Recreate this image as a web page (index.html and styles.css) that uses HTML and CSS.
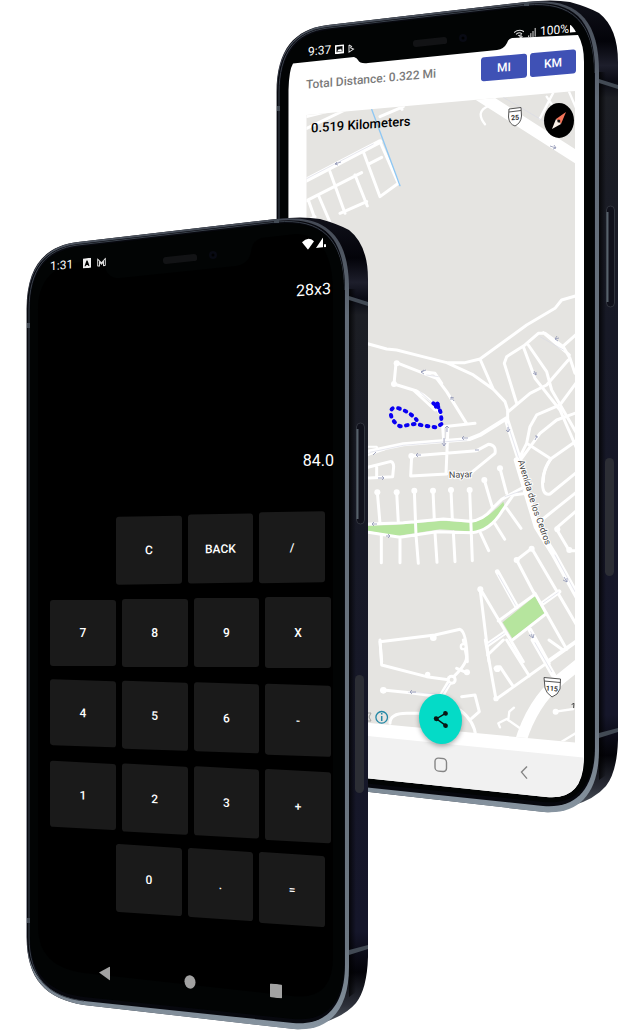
FILE: index.html
```html
<!DOCTYPE html>
<html lang="en">
<head>
<meta charset="utf-8">
<meta name="viewport" content="width=device-width, initial-scale=1">
<title>Distance tracker and calculator</title>
<link rel="stylesheet" href="styles.css">
</head>
<body>
<svg class="defs" aria-hidden="true">
  <defs>
    <linearGradient id="side" x1="0" x2="0" y1="0" y2="1">
      <stop offset="0" stop-color="#10111a"/><stop offset=".05" stop-color="#030309"/><stop offset=".08" stop-color="#1d1e2b"/><stop offset=".1" stop-color="#090a13"/><stop offset=".12" stop-color="#1c1e24"/>
      <stop offset=".4" stop-color="#171926"/><stop offset=".88" stop-color="#15162a"/><stop offset=".93" stop-color="#030308"/><stop offset=".97" stop-color="#2b2e38"/><stop offset="1" stop-color="#5b636c"/>
    </linearGradient>
    <linearGradient id="rim" x1="0" x2="0" y1="0" y2="1">
      <stop offset="0" stop-color="#444a55"/><stop offset=".12" stop-color="#626c78"/><stop offset=".9" stop-color="#6c7782"/><stop offset="1" stop-color="#8794a0"/>
    </linearGradient>
    <linearGradient id="edge" x1="0" x2="1" y1="0" y2="0">
      <stop offset="0" stop-color="#000" stop-opacity=".75"/><stop offset="1" stop-color="#000" stop-opacity="0"/>
    </linearGradient>
    <symbol id="frame" viewBox="0 0 342 813">
      <path fill="url(#side)" d="M0.6 92C0.6 50 18 29 52 25L250 2Q276 -1 294 2Q312 7 323 13Q342 28 342 62V740Q341 772 330 786Q319 799 296 806Q284 813 268 812L58 788C20 782 0.6 762 0.6 720Z"/>
      <path fill="url(#rim)" d="M0.8 92C0.8 51 19 29 52 25L250 2C300 -3 323 18 323 72V750C323 793 303 815 268 812L58 788C20 782 0.8 762 0.8 720Z"/>
      <path fill="#07080e" d="M1 93C1 52 19 31 52 27L250 4C298 -1 319 20 319 73V747C319 789 300 809 267 806L58 784C24 780 1 760 1 720Z"/>
      <path fill="none" stroke="#39404a" d="M3 720V93C3 53 19 32 52 28L250 5C296 1 318 22 318 73M3 720C3 760 22 780 58 784"/>
      <path fill="#020404" d="M4 93C4 54 21 34 52 30L250 7C296 2 318 24 318 73V747C318 787 299 805 267 802L58 780C24 776 4 757 4 720Z"/>
      <path fill="url(#edge)" d="M323 72H330V775L323 780Z"/>
      <path fill="#424a54" d="M323 79L342 85V89L323 83ZM323 733L342 728V732L323 738ZM1 106H4V111H1ZM1 701H4V706H1ZM248 2L253 2V6L248 6Z"/>
      <rect x="330.500" y="206" width="8" height="101" rx="4" fill="#10111b" stroke="#30343d"/>
      <path d="M331.500 212V302" stroke="#56616b" stroke-width="2"/>
      <rect x="329" y="458" width="9" height="118" rx="4.500" fill="#2c2e35"/>
      <path fill="#121315" d="M140 40L168 37Q171 37 171 40V42Q171 44 168 44L140 47Q137 47 137 44V43Q137 40 140 40Z"/>
      <circle cx="187" cy="38" r="4" fill="#080a13"/><circle cx="187" cy="38" r="1.500" fill="#000"/>
    </symbol>
    <clipPath id="map-area"><path d="M306.500 115L575 91V742.500L306.500 717Z"/></clipPath>
  </defs>
</svg>

<main class="scene">
  <section class="phone phone-back" aria-label="Distance tracker">
    <svg class="art" viewBox="276 0 342 813" preserveAspectRatio="none" aria-hidden="true">
      <use href="#frame" x="276" y="0" width="342" height="813"/>
      <path fill="#fff" d="M288.500 90Q289 70 293 63.500L354 57Q357 58 358 60Q360 64 368 63L497 50Q504 49 507 43Q508 39 512 38L578 35Q584 45 584 62V757Q584 801 546 797L288 770Z"/>
      <path fill="#f1f1f1" d="M288 728L583 757.500Q584 801 546 797L288 770Z"/>
      <g clip-path="url(#map-area)">
        <path fill="#e5e4e1" d="M300 80H580V750H300Z"/>
        <g class="road" transform="translate(270 0) scale(.3333)">
          <path stroke-width="14" d="M100 545L330 425"/>
          <path d="M280 455L330 590L385 550L330 425M300 490L335 472M110 602L200 556L275 518M180 515L225 640M210 640L290 605M255 525L292 618M145 585L190 690M115 600L150 700M100 670L135 650M110 385L225 330M110 350L170 335M330 350L400 320M388 315L396 328"/>
          <path stroke-width="36" d="M625 283L930 478"/>
          <path d="M810 355L850 278M895 270L925 340M830 290L850 320M645 373Q615 335 655 318" stroke-width="7"/>
          <path class="lane" d="M700 292L900 410M110 536L310 432"/>
          <path stroke="#8ec7f3" stroke-width="4" d="M305 328L390 557"/>
        </g>
        <g class="road" transform="translate(360 200) scale(.3333)">
          <path d="M15 429L80 447L110 450L200 473L260 488L315 488L360 477L500 375L585 325L605 300L650 287M260 488L340 525L400 568L435 605L443 630V660M360 477L400 568M102 552L108 490L115 490L230 535L260 575L318 668M102 552L170 573Q215 595 240 640M160 570L225 630M190 515L225 520L245 550M250 680L345 670M248 680L252 735M264 680L258 822M155 768L350 752L385 733Q410 735 405 760L335 817M155 768L152 828L260 822"/>
          <path stroke-width="12" d="M10 758L130 733L330 717L360 705L440 655"/>
          <path stroke-width="6" d="M25 740H50L55 755M10 770L75 748"/>
          <path stroke-width="16" d="M440 660L480 785"/>
          <path d="M445 635L510 580L560 555L625 480M470 610L433 490L440 470L495 435L535 400L555 400L610 440L630 475L645 520M550 398L628 465M490 440L525 535L600 630L650 745M505 435L560 515L575 570L650 700M650 402L610 438M650 547L600 615L530 645L510 680L500 730L480 770M650 638L590 660L540 700L485 775M500 730L570 775M650 722L575 775Q550 800 550 845"/>
          <g fill="#fff" stroke="none"><circle cx="110" cy="490" r="9"/><circle cx="102" cy="552" r="9"/><circle cx="154" cy="768" r="9"/></g>
          <path class="lane" d="M200 525L235 530M180 575L225 618M252 740L257 690M540 410L610 450M30 757L130 736L320 720M443 672L478 780"/>
          <path stroke="#0a00f2" stroke-width="12" stroke-dasharray="5 16" d="M232 612L243 640L245 672L228 682L205 679L165 672L120 679Q95 665 92 640Q92 620 112 624Q150 635 170 660"/>
          <path stroke="#0a00f2" stroke-width="12" d="M220 610L235 622M233 611L228 620"/>
        </g>
        <g class="road" transform="translate(360 460) scale(.3333)">
          <path fill="#b6e59e" stroke="none" d="M20 197L100 195L165 190L250 182L335 188Q380 180 430 125L434 140Q400 205 345 215L240 208L110 228L20 212Z"/>
          <path fill="#b6e59e" stroke="none" d="M525 408L553 460L457 535L428 487Z"/>
          <path d="M15 24L90 5Q100 3 101 20L98 50L15 55M50 15V50M52 97L60 190M110 97L115 187M163 92L168 225L175 310M219 92L223 180M273 90L277 178M329 90L337 302M373 60L398 145M420 25L440 100M64 228V308M120 232V308M225 218L231 307M280 216L285 305M362 220L386 272M404 190L434 238M440 145L483 205M15 193L130 188L250 177L330 184Q370 180 395 148L425 118L490 82M15 215L120 232L230 215L335 218Q390 212 425 155L460 105L500 100"/>
          <path stroke-width="18" d="M470 0L500 100L530 200L580 280L655 415"/>
          <path d="M570 0Q540 50 550 90Q555 105 570 102L650 37M545 180L650 96M650 152L588 205L628 272H650M525 405L470 300L515 265L650 495M360 385L490 605M360 385L387 605M525 400L620 568M415 483L525 403M455 542L560 460M560 605L650 542M65 605L60 545L225 525L300 508Q320 515 322 605"/>
          <path stroke-width="14" d="M412 335L470 440M510 510L565 610M382 555L435 518M548 430L597 395"/>
          <g fill="#fff" stroke="none"><circle cx="52" cy="97" r="9"/><circle cx="110" cy="97" r="9"/><circle cx="163" cy="92" r="9"/><circle cx="219" cy="92" r="9"/><circle cx="273" cy="90" r="9"/><circle cx="329" cy="90" r="9"/><circle cx="373" cy="60" r="9"/><circle cx="420" cy="25" r="9"/><circle cx="470" cy="300" r="9"/><circle cx="515" cy="266" r="9"/><circle cx="592" cy="208" r="9"/><circle cx="628" cy="270" r="9"/><circle cx="361" cy="388" r="9"/><circle cx="220" cy="533" r="10"/><circle cx="310" cy="560" r="11"/></g>
          <path class="lane" d="M415 345L467 436M512 515L560 600M384 553L433 520M550 428L595 397M585 285L645 395M435 110L490 90"/>
        </g>
        <g class="road" transform="translate(360 640) scale(.3333)">
          <path d="M60 0L65 75L200 110L270 120Q320 75 320 50L310 0M70 150L150 158L240 170M90 250Q90 220 140 220H190M305 170L345 165L358 215L335 235M300 210Q345 245 347 290M376 0L408 178L650 5M383 45L430 0M405 85L420 80L460 140M440 0L508 108M567 0L612 32M290 85L320 98"/>
          <path stroke-width="16" d="M272 120L240 175M520 0L580 105"/>
          <path stroke-width="34" d="M480 310Q515 190 600 118L660 70"/>
          <path stroke-width="7" d="M415 250L440 237L480 265M415 250L420 262M445 238L448 215L462 203M587 215L640 207M600 308L650 278"/>
          <g fill="#fff" stroke="none"><circle cx="70" cy="151" r="10"/><circle cx="203" cy="103" r="8"/><circle cx="310" cy="20" r="10"/><circle cx="321" cy="97" r="9"/><circle cx="275" cy="119" r="15"/><circle cx="412" cy="86" r="10"/><circle cx="408" cy="176" r="8"/><circle cx="587" cy="215" r="9"/></g>
          <path class="lane" d="M145 157L230 161M525 8L575 95M268 130L245 165"/>
          <circle cx="310" cy="20" r="4" fill="#e5e4e1" stroke="none"/>
          <circle cx="275" cy="119" r="6" fill="#e5e4e1" stroke="none"/>
          <path stroke="#444" stroke-width="3" d="M636 193L642 190L641 203"/>
        </g>
        <g fill="none" stroke="#8f96b4" stroke-width=".8">
          <path d="M341 162L335 164M337 162L335 164L338 165M550 146L556 148M554 145L556 148L553 149M426 370L421 372M424 370L421 372L424 374M451 397L454 401M451 400V397L454 398M534 371L536 375M533 373L536 375V372M468 438H462M464 436L462 438L464 440M421 455H416M418 453L416 455L418 457M479 450H475M447 432V426M445 428L447 426L449 428M444 438V446M442 443L444 446L446 443M559 338L555 339M557 336L555 339L558 341M508 427V432M506 430L508 432L510 429M377 524H372M374 522L372 524L374 526M386 536H390M388 534L390 536L388 538M378 478H384M382 476L384 478L382 480M564 577L567 582M563 580L567 582V578M531 634L533 638M529 635L533 638L534 634M416 692H410M412 690L410 692L412 694M537 436L535 440M537 438V436H535M376 452L373 455"/>
        </g>
      </g>
      <g class="shield">
        <path d="M509 109L521 107.500L521.500 116Q521 123 515 126Q509 124 508.500 117ZM509 112L521 110.500"/>
        <path d="M544 677.500L560.500 679L560 689Q558 695 552 697Q546 693 545 688ZM544 681L560.500 682.500"/>
      </g>
      <text class="map-number" x="511" y="120" transform="rotate(-4 515 117)">25</text>
      <text class="map-number" x="546" y="691" transform="rotate(4 552 688)">115</text>
      <text class="map-label" x="449" y="478" transform="rotate(-2 449 478)">Nayar</text>
      <path id="avenue-line" fill="none" d="M518 461L532 508L551 560"/>
      <text class="map-label"><textPath href="#avenue-line">Avenida de los Cedros</textPath></text>
      <circle cx="381.700" cy="717.300" r="5.800" fill="none" stroke="#2387a5" stroke-width="1.300"/>
      <path stroke="#2387a5" stroke-width="1.500" d="M381.700 713V714.500M381.700 716V721"/>
      <path d="M367 713H371L369 717L371 721H367" fill="none" stroke="#a5a5a3"/>
    </svg>

    <div class="screen tracker">
      <div class="status">
        <span>9:37</span>
        <svg width="9" height="10" viewBox="0 0 9 10"><path fill="#fff" fill-rule="evenodd" d="M0 1H9V10H0ZM1.500 2.500V8H7.500V2.500ZM2 7.500L4 5L5 6L6 4.500L7 7.500Z"/></svg>
        <svg width="7" height="9" viewBox="0 0 7 9"><path fill="none" stroke="#ddd" d="M1 1V8L5.500 5.500L2 3.500M1 1L4 3"/></svg>
        <span class="push"></span>
        <svg width="10" height="9" viewBox="0 0 10 9"><path fill="none" stroke="#ddd" d="M0 3Q5 -1 10 3M2 5Q5 2 8 5M4 6.500Q5 5.500 6 7M7 5V9M5.500 7.500L7 9L8.500 7.500"/></svg>
        <svg width="8" height="9" viewBox="0 0 8 9"><path fill="none" stroke="#bbb" stroke-width="1.200" d="M.6 9V7M2.800 9V5M5 9V3M7.200 9V0"/></svg>
        <span>100%</span>
        <svg width="6" height="8" viewBox="0 0 6 8"><path fill="#fff" d="M0 0Q3 2 6 8H0Z"/></svg>
      </div>
      <div class="summary">
        <p class="total">Total Distance: 0.322 Mi</p>
        <button class="unit" type="button">MI</button>
        <button class="unit" type="button">KM</button>
      </div>
      <div class="map-tools">
        <p class="distance">0.519 Kilometers</p>
        <button class="compass" type="button" aria-label="Compass">
          <svg width="18" height="22" viewBox="0 0 18 22"><path fill="#f4755a" d="M16 2L6 9L11 14Z"/><path fill="#f6efe6" d="M2 19L6 9L11 14Z"/><circle cx="8.800" cy="11" r="1.500" fill="#111"/></svg>
        </button>
      </div>
      <button class="share" type="button" aria-label="Share">
        <svg width="16" height="20" viewBox="0 0 16 20"><path fill="none" stroke="#0a1413" stroke-width="1.500" d="M12.500 4L3.500 10L12.500 16"/><g fill="#0a1413"><circle cx="12.500" cy="4" r="2.400"/><circle cx="3.300" cy="10" r="2.500"/><circle cx="12.500" cy="16.200" r="2.400"/></g></svg>
      </button>
      <nav class="system-nav">
        <span></span>
        <button type="button" aria-label="Home"><svg width="14" height="16" viewBox="0 0 14 16"><rect x="1" y="1.300" width="11.500" height="13" rx="3.500" fill="none" stroke="#858585" stroke-width="1.400"/></svg></button>
        <button type="button" aria-label="Back"><svg width="10" height="14" viewBox="0 0 10 14"><path fill="none" stroke="#858585" stroke-width="1.400" d="M8 1L2.500 7L8 13"/></svg></button>
      </nav>
    </div>
  </section>

  <section class="phone phone-front" aria-label="Calculator">
    <svg class="art" viewBox="0 0 342 813" preserveAspectRatio="none" aria-hidden="true">
      <use href="#frame" width="342" height="813"/>
      <path fill="#000" d="M12 93C12 66 25 48 56 45L70 43Q78 42 79 49Q81 62 94 61L210 49Q223 47 225 35Q226 24 235 21L270 17Q307 18 307 76V740Q307 784 266 779L58 756Q12 750 12 710Z"/>
    </svg>
    <div class="screen calculator">
      <div class="status">
        <span>1:31</span>
        <svg class="app-icon" width="8" height="10" viewBox="0 0 8 10"><path fill="#eee" fill-rule="evenodd" d="M0 0H8V10H0ZM1.500 8H2.700L3 7H5L5.300 8H6.500L4.500 2.500H3.500Z"/></svg>
        <svg width="9" height="9" viewBox="0 0 9 9"><path fill="none" stroke="#ddd" d="M.7 8V1L4.500 5L8.300 1V8M.7 8H2.500V4L4.500 6.500L6.500 4V8H8.300"/></svg>
        <span class="push"></span>
        <svg width="12" height="12" viewBox="0 0 12 12"><path fill="#fff" d="M0 4Q6 -2 12 4L6 12Z"/></svg>
        <svg width="10" height="10" viewBox="0 0 10 10"><path fill="#fff" d="M0 10L7 0V10ZM8 7H10V10H8Z"/></svg>
      </div>
      <output class="entry">28x3</output>
      <output class="result">84.0</output>
      <div class="keypad">
        <div class="keys keys-short keys-1"><button type="button">C</button><button type="button">BACK</button><button type="button">/</button></div>
        <div class="keys keys-2"><button type="button">7</button><button type="button">8</button><button type="button">9</button><button type="button">X</button></div>
        <div class="keys keys-3"><button type="button">4</button><button type="button">5</button><button type="button">6</button><button type="button">-</button></div>
        <div class="keys keys-4"><button type="button">1</button><button type="button">2</button><button type="button">3</button><button type="button">+</button></div>
        <div class="keys keys-short keys-5"><button type="button">0</button><button type="button">.</button><button type="button">=</button></div>
      </div>
      <nav class="system-nav">
        <button type="button" aria-label="Back"><svg width="12" height="14" viewBox="0 0 12 14"><path fill="#a2a2a2" d="M11 0V14L0 7Z"/></svg></button>
        <button type="button" aria-label="Home"><svg width="12" height="14" viewBox="0 0 12 14"><ellipse cx="6" cy="7" rx="5.500" ry="6.700" fill="#a2a2a2"/></svg></button>
        <button type="button" aria-label="Recents"><svg width="12" height="14" viewBox="0 0 12 14"><rect width="12" height="14" rx="1" fill="#a2a2a2"/></svg></button>
      </nav>
    </div>
  </section>
</main>
</body>
</html>
```
FILE: styles.css
```css
* { box-sizing: border-box; }
body { margin: 0; background: #fff; font-family: Roboto, "Liberation Sans", sans-serif; }
p { margin: 0; }
button { border: 0; padding: 0; font-family: inherit; cursor: pointer; display: grid; place-items: center; }
.defs { position: absolute; width: 0; height: 0; }

.scene {
  display: grid;
  grid-template-columns: 26fr 250fr 92fr 250fr 26fr;
  grid-template-rows: 217px 596px 217px;
  padding-bottom: 1px;
}
.phone { position: relative; display: grid; }
.phone-back { grid-column: 3 / 5; grid-row: 1 / 3; }
.phone-front { grid-column: 2 / 4; grid-row: 2 / 4; }
.art { position: absolute; inset: 0; width: 100%; height: 100%; overflow: visible; }
.screen { position: relative; display: flex; flex-direction: column; }

.road { fill: none; stroke: #fff; stroke-width: 9; stroke-linecap: round; stroke-linejoin: round; }
.road .lane { stroke: #d9dbe6; stroke-width: 2; }
.shield { fill: #fff; stroke: #555; stroke-width: 1; }
.map-number { font-size: 7px; font-weight: 700; fill: #333; }
.map-label { font-size: 9px; fill: #444; stroke: #fff; stroke-width: 2px; paint-order: stroke; }

.status { display: flex; align-items: center; gap: 4px; height: 24px; color: #fff; font-size: 12px; }
.push { flex: 1; }

.tracker { padding: 28px 42px 36px 30px; }
.tracker .status { padding-left: 2px; transform: skewY(-5deg); }
.tracker .status span:last-of-type { margin-right: -3px; }
.summary { display: flex; align-items: center; gap: 3px; height: 26px; margin-top: 8px; transform: skewY(-5deg); }
.total { flex: 1; font-size: 12px; font-weight: 500; color: #7a7a7a; white-space: nowrap; }
.unit { width: 46px; height: 24px; border-radius: 3px; background: #3f51b5; color: #fff; font-size: 12px; font-weight: 500; }
.map-tools { display: flex; align-items: flex-start; justify-content: space-between; margin: 17px 2px 0 5px; }
.distance { padding-top: 14px; font-size: 13px; font-weight: 500; color: #000; line-height: 16px; transform: skewY(-4deg); }
.compass { width: 30px; height: 35px; border-radius: 50%; background: #000; }
.share {
  position: absolute; left: 143px; top: 694px; width: 43px; height: 50px;
  border-radius: 50%; background: #04dbc7; box-shadow: 0 2px 5px #0005; transform: skewY(4deg);
}
.system-nav { display: grid; grid-template-columns: 1fr 1fr 1fr; height: 24px; }
.system-nav button { background: none; }
.tracker .system-nav { margin: auto 11px 0 10px; transform: skewY(5deg); }

.calculator { padding: 25px 37px 36px 24px; }
.calculator .status { padding-right: 5px; transform: skewY(-5deg); gap: 2px; }
.calculator .status .app-icon { margin: 0 4px 0 8px; }
.entry, .result { display: block; align-self: flex-end; color: #fff; font-size: 16px; line-height: 20px; }
.entry { margin-top: 14px; transform: skewY(-4deg); }
.result { margin: 151px -3px 0 0; }
.keypad { display: grid; gap: 15px; margin-top: 42px; }
.keys { display: grid; grid-template-columns: repeat(4, 1fr); align-items: center; gap: 6px; height: 69px; }
.keys-short { grid-template-columns: repeat(3, 1fr); margin: 0 6px 0 66px; }
.keys button { height: 66px; border-radius: 3px; background: #1a1a1a; color: #fff; font-size: 12px; font-weight: 500; }
.keys button:nth-last-child(3) { height: 68px; }
.keys button:nth-last-child(2) { height: 69px; }
.keys button:last-child { height: 71px; }
.keys-1 { transform: skewY(-1deg); }
.keys-3 { transform: skewY(2deg); }
.keys-4 { transform: skewY(3deg); }
.keys-5 { transform: skewY(4deg); }
.calculator .system-nav { margin: auto 12px 0 12px; transform: skewY(6deg); }
```
